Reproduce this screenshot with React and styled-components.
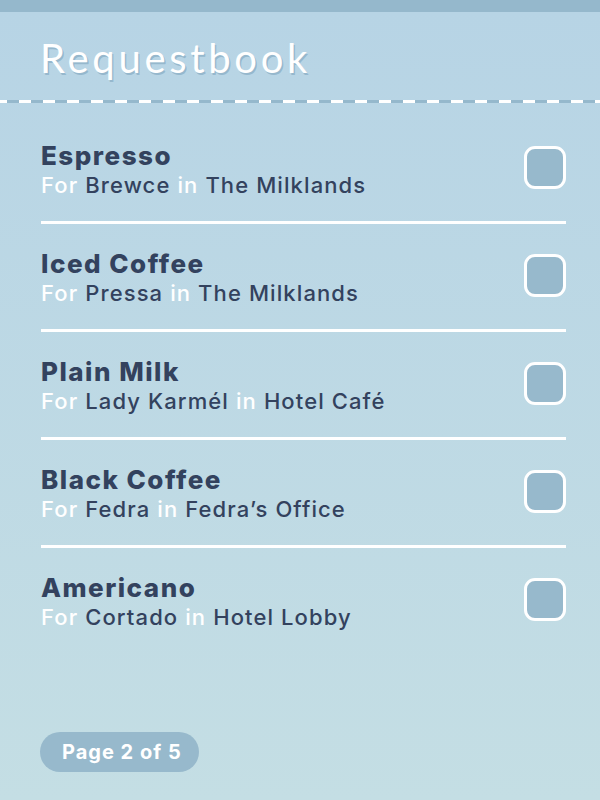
import React from "react";
import styled, { createGlobalStyle } from "styled-components";

const Global = createGlobalStyle`
  html, body { margin: 0; padding: 0; }
  body { width: 600px; height: 800px; overflow: hidden; }
`;

const Page = styled.div`
  width: 600px;
  height: 800px;
  box-sizing: border-box;
  display: flex;
  flex-direction: column;
  background: linear-gradient(180deg, #b7d4e5 0%, #c4dee4 100%);
  border-top: 12px solid #95b8cc;
  font-family: "Inter", "Roboto", sans-serif;
`;

const Header = styled.header`
  height: 88px;
  box-sizing: border-box;
  padding: 22px 40px 0;
  display: flex;
  align-items: flex-start;
`;

const Title = styled.h1`
  margin: 0;
  font-family: "Lato", "DejaVu Sans", sans-serif;
  font-weight: 400;
  font-size: 40px;
  line-height: 48px;
  color: #ffffff;
  letter-spacing: 3.7px;
  text-shadow: 1.5px 2px 0 rgba(120, 160, 185, 0.55);
`;

const Dashed = styled.div`
  height: 3px;
  background: repeating-linear-gradient(
    90deg,
    #ffffff 0px,
    #ffffff 12px,
    #95b8cc 12px,
    #95b8cc 24px
  );
  background-position: -5px 0;
`;

const List = styled.ul`
  list-style: none;
  margin: 0;
  padding: 31px 34px 0 41px;
  display: flex;
  flex-direction: column;
`;

const Item = styled.li`
  display: flex;
  align-items: center;
  justify-content: space-between;
  padding: ${(p) => (p.$first ? "6px" : "24px")} 0 22px;
  border-bottom: 3px solid ${(p) => (p.$last ? "transparent" : "#ffffff")};
`;

const Info = styled.div`
  display: flex;
  flex-direction: column;
`;

const Drink = styled.div`
  font-weight: 800;
  font-size: 26px;
  line-height: 31px;
  color: #33425e;
  letter-spacing: 1.5px;
`;

const Detail = styled.div`
  font-weight: 500;
  font-size: 22px;
  line-height: 28px;
  color: #33425e;
  letter-spacing: 1.1px;
`;

const Soft = styled.span`
  color: #ffffff;
`;

const Check = styled.div`
  width: 36px;
  height: 37px;
  margin-bottom: 5px;
  border: 3px solid #ffffff;
  border-radius: 11px;
  background: #97b9cc;
  flex-shrink: 0;
`;

const Footer = styled.div`
  margin-top: auto;
  padding: 0 0 28px 40px;
  display: flex;
`;

const Pill = styled.div`
  height: 40px;
  padding: 0 17px 0 22px;
  border-radius: 20px;
  background: #97b9cc;
  color: #ffffff;
  font-weight: 700;
  font-size: 20px;
  line-height: 40px;
  letter-spacing: 1px;
`;

const items = [
  { drink: "Espresso", who: "Brewce", where: "The Milklands" },
  { drink: "Iced Coffee", who: "Pressa", where: "The Milklands" },
  { drink: "Plain Milk", who: "Lady Karmél", where: "Hotel Café" },
  { drink: "Black Coffee", who: "Fedra", where: "Fedra’s Office" },
  { drink: "Americano", who: "Cortado", where: "Hotel Lobby" },
];

export default function App() {
  return (
    <>
      <Global />
      <Page>
        <Header>
          <Title>Requestbook</Title>
        </Header>
        <Dashed />
        <List>
          {items.map((it, i) => (
            <Item key={it.drink} $first={i === 0} $last={i === items.length - 1}>
              <Info>
                <Drink>{it.drink}</Drink>
                <Detail>
                  <Soft>For</Soft> {it.who} <Soft>in</Soft> {it.where}
                </Detail>
              </Info>
              <Check />
            </Item>
          ))}
        </List>
        <Footer>
          <Pill>Page 2 of 5</Pill>
        </Footer>
      </Page>
    </>
  );
}
